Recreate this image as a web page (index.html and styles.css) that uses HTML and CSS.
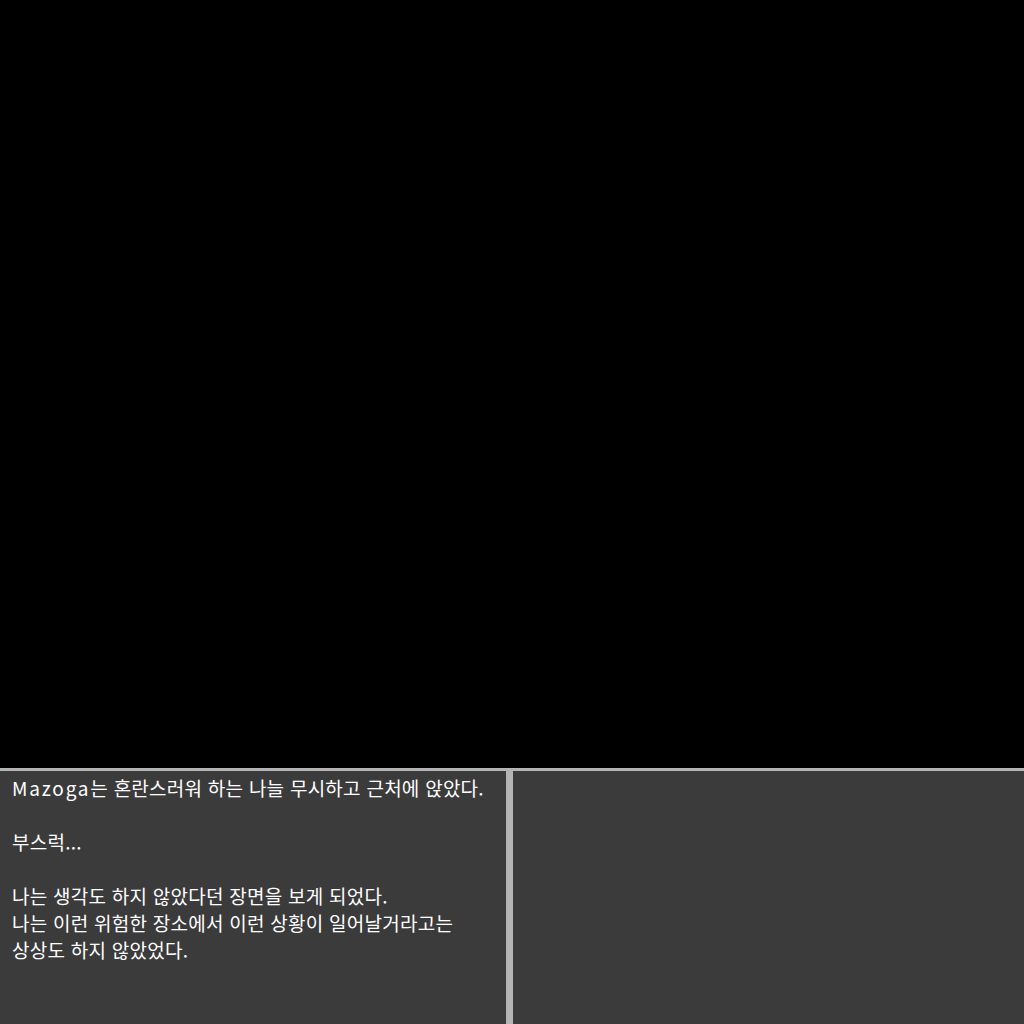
FILE: index.html
```html
<!DOCTYPE html>
<html lang="ko">
<head>
<meta charset="utf-8">
<link rel="stylesheet" href="styles.css">
</head>
<body>
<div class="scene"></div>
<div class="hud">
  <div class="panel text-panel">
    <p class="line"><span class="name">Mazoga</span>는 혼란스러워 하는 나늘 무시하고 근처에 앉았다.</p>
    <p class="line">&nbsp;</p>
    <p class="line">부스럭...</p>
    <p class="line">&nbsp;</p>
    <p class="line">나는 생각도 하지 않았다던 장면을 보게 되었다.</p>
    <p class="line">나는 이런 위험한 장소에서 이런 상황이 일어날거라고는</p>
    <p class="line">상상도 하지 않았었다.</p>
  </div>
  <div class="divider"></div>
  <div class="panel side-panel"></div>
</div>
</body>
</html>
```
FILE: styles.css
```css
html, body {
  margin: 0;
  padding: 0;
  background: #000;
  width: 1024px;
  height: 1024px;
  overflow: hidden;
}
.scene {
  height: 768px;
  background: #000;
}
.hud {
  height: 253px;
  border-top: 3px solid #b4b4b4;
  display: grid;
  grid-template-columns: 506px 7px 1fr;
}
.panel {
  background: #3b3b3b;
}
.divider {
  background: #b4b4b4;
}
.text-panel {
  padding: 3px 0 0 12px;
  font-family: "Noto Sans CJK KR", "Noto Sans", sans-serif;
  font-size: 19px;
  line-height: 27px;
  letter-spacing: 0.25px;
  color: #fff;
}
.name {
  letter-spacing: 1.8px;
}
.line {
  margin: 0;
  white-space: nowrap;
}
```
